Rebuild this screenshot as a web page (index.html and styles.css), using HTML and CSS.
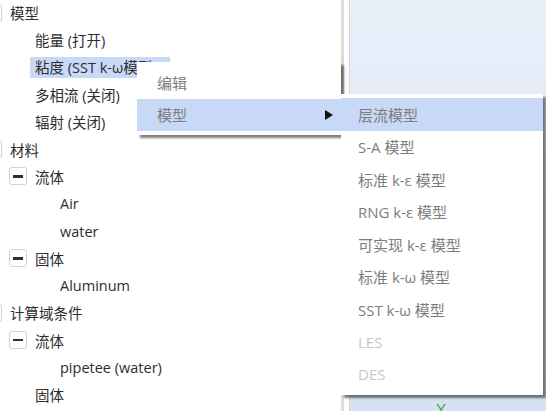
FILE: index.html
```html
<!DOCTYPE html>
<html>
<head>
<meta charset="utf-8">
<link rel="stylesheet" href="styles.css">
</head>
<body>
<div class="app">
  <div class="tree">
    <div class="row l0"><span class="tg"><i></i></span><span class="lbl">模型</span></div>
    <div class="row l1"><span class="sp"></span><span class="lbl">能量 (打开)</span></div>
    <div class="row l1"><span class="sp"></span><span class="lbl sel">粘度 (SST k-ω模型)</span></div>
    <div class="row l1"><span class="sp"></span><span class="lbl">多相流 (关闭)</span></div>
    <div class="row l1"><span class="sp"></span><span class="lbl">辐射 (关闭)</span></div>
    <div class="row l0"><span class="tg"><i></i></span><span class="lbl">材料</span></div>
    <div class="row l1"><span class="tg"><i></i></span><span class="lbl">流体</span></div>
    <div class="row l2"><span class="sp"></span><span class="lbl">Air</span></div>
    <div class="row l2"><span class="sp"></span><span class="lbl">water</span></div>
    <div class="row l1"><span class="tg"><i></i></span><span class="lbl">固体</span></div>
    <div class="row l2"><span class="sp"></span><span class="lbl">Aluminum</span></div>
    <div class="row l0"><span class="tg"><i></i></span><span class="lbl">计算域条件</span></div>
    <div class="row l1"><span class="tg"><i></i></span><span class="lbl">流体</span></div>
    <div class="row l2"><span class="sp"></span><span class="lbl">pipetee (water)</span></div>
    <div class="row l1"><span class="sp"></span><span class="lbl">固体</span></div>
  </div>
  <div class="track"></div>
  <div class="view"><span class="axis">Y</span></div>

  <div class="menu m1">
    <div class="item">编辑</div>
    <div class="item hl">模型<span class="arrow"></span></div>
  </div>
  <div class="menu m2">
    <div class="item hl">层流模型</div>
    <div class="item">S-A 模型</div>
    <div class="item">标准 k-ε 模型</div>
    <div class="item">RNG k-ε 模型</div>
    <div class="item">可实现 k-ε 模型</div>
    <div class="item">标准 k-ω 模型</div>
    <div class="item">SST k-ω 模型</div>
    <div class="item dis">LES</div>
    <div class="item dis">DES</div>
  </div>
</div>
</body>
</html>
```

FILE: styles.css
```css
html, body {
  margin: 0;
  padding: 0;
  background: #ffffff;
}
body {
  font-family: "Open Sans", "Noto Sans CJK SC", sans-serif;
  overflow: hidden;
}
.app {
  position: relative;
  display: flex;
  width: 546px;
  height: 411px;
  overflow: hidden;
}
.tree {
  width: 357px;
  flex: none;
  margin-top: -1px;
  margin-left: -16px;
  font-size: 14.5px;
  color: #2e2e2e;
}
.row {
  display: flex;
  align-items: center;
  height: 27.3px;
  gap: 8px;
  white-space: nowrap;
}
.l1 { padding-left: 25px; }
.l2 { padding-left: 50px; }
.tg, .sp {
  flex: none;
  width: 18px;
  height: 18px;
  box-sizing: border-box;
}
.tg {
  border: 1px solid #d2d2d2;
  border-radius: 3px;
  display: flex;
  align-items: center;
  justify-content: center;
  background: #fff;
}
.tg i {
  display: block;
  width: 10px;
  height: 2.5px;
  background: #2b3047;
}
.lbl.sel {
  background: #c8d8f7;
  margin-left: -5px;
  padding: 0 14px 0 5px;
  line-height: 21px;
}
.track {
  width: 3px;
  flex: none;
  background: #dcdcdc;
}
.view {
  position: relative;
  flex: 1;
  margin-left: 5px;
  background: linear-gradient(#eaf0fa, #d6e1f1);
  border-left: 1px solid #cfd4dc;
}
.axis {
  position: absolute;
  left: 86px;
  top: 401px;
  color: #3aa83a;
  font-size: 15px;
  line-height: 15px;
  font-family: "Liberation Sans", sans-serif;
}
.menu {
  position: absolute;
  background: #ffffff;
  padding: 4px 0;
  box-shadow: 3px 3px 2px rgba(0, 0, 0, 0.5);
  font-size: 15px;
  color: #7d7d7d;
}
.m1 {
  left: 137px;
  top: 62px;
  width: 204px;
}
.m2 {
  left: 341px;
  top: 94px;
  width: 202px;
}
.item {
  display: flex;
  align-items: center;
  height: 32.5px;
  padding-left: 20px;
  white-space: nowrap;
}
.m2 .item { padding-left: 17px; }
.item.hl { background: #c8d8f7; }
.item.dis { color: #c8c8c8; }
.arrow {
  margin-left: auto;
  margin-right: 8px;
  width: 0;
  height: 0;
  border-left: 8px solid #111;
  border-top: 5px solid transparent;
  border-bottom: 5px solid transparent;
}
```
